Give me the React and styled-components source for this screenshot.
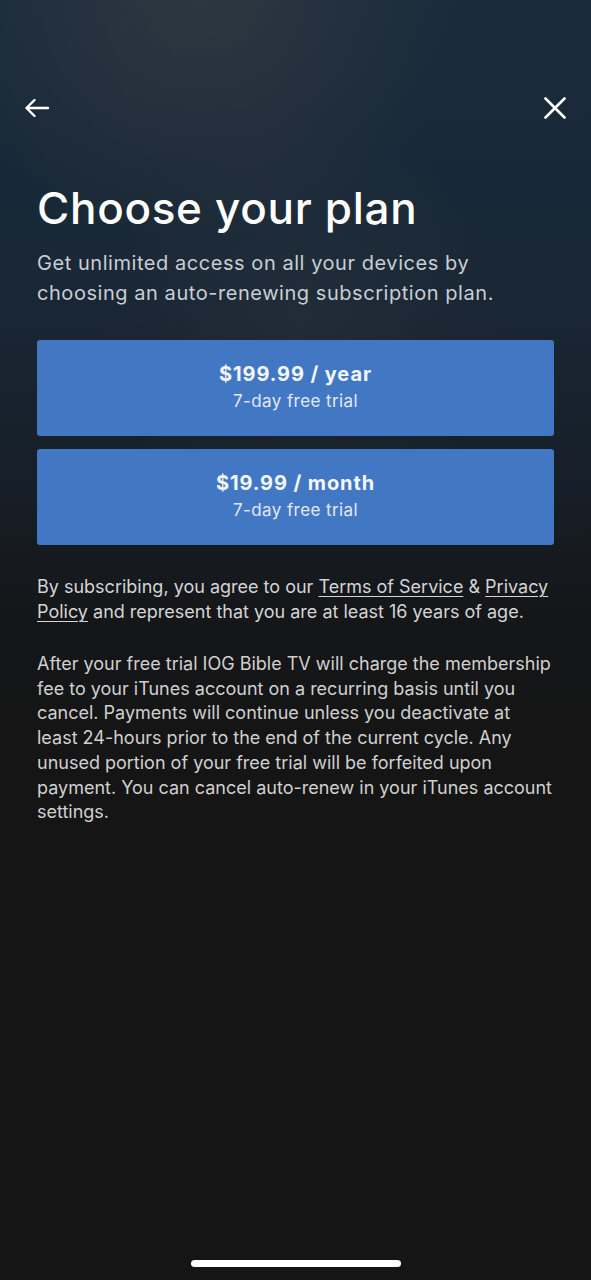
import React from "react";
import styled, { createGlobalStyle } from "styled-components";

const GlobalStyle = createGlobalStyle`
  html, body { margin: 0; padding: 0; background: #151515; }
  body { font-family: Inter, "Noto Sans", sans-serif; -webkit-font-smoothing: antialiased; }
`;

const plans = [
  { price: "$199.99 / year", trial: "7-day free trial" },
  { price: "$19.99 / month", trial: "7-day free trial" },
];

export default function App() {
  return (
    <>
      <GlobalStyle />
      <Page>
        <Header>
          <IconButton aria-label="Back">
            <svg width="26" height="26" viewBox="0 0 26 26" fill="none" stroke="#fff" strokeWidth="2.4" strokeLinecap="round" strokeLinejoin="round">
              <path d="M24 13H2.5M10.5 5L2.5 13l8 8" />
            </svg>
          </IconButton>
          <IconButton aria-label="Close">
            <svg width="22" height="22" viewBox="0 0 22 22" fill="none" stroke="#fff" strokeWidth="2.6" strokeLinecap="round">
              <path d="M1.5 1.5l19 19M20.5 1.5l-19 19" />
            </svg>
          </IconButton>
        </Header>

        <Content>
          <Title>Choose your plan</Title>
          <Subtitle>
            Get unlimited access on all your devices by choosing an auto-renewing subscription plan.
          </Subtitle>

          <Plans>
            {plans.map((p) => (
              <PlanButton key={p.price}>
                <Price>{p.price}</Price>
                <Trial>{p.trial}</Trial>
              </PlanButton>
            ))}
          </Plans>

          <Legal>
            By subscribing, you agree to our <LinkText>Terms of Service</LinkText> &amp;{" "}
            <LinkText>Privacy Policy</LinkText> and represent that you are at least 16 years of age.
          </Legal>
          <Fine>
            After your free trial IOG Bible TV will charge the membership fee to your iTunes account on a
            recurring basis until you cancel. Payments will continue unless you deactivate at least
            24-hours prior to the end of the current cycle. Any unused portion of your free trial will be
            forfeited upon payment. You can cancel auto-renew in your iTunes account settings.
          </Fine>
        </Content>

        <HomeBar />
      </Page>
    </>
  );
}

const Page = styled.div`
  position: relative;
  min-height: 1280px;
  box-sizing: border-box;
  display: flex;
  flex-direction: column;
  background:
    radial-gradient(ellipse 260px 240px at 200px 0px, rgba(70, 70, 70, 0.45), rgba(70, 70, 70, 0) 100%),
    radial-gradient(ellipse 200px 220px at 300px 330px, rgba(90, 90, 80, 0.12), rgba(90, 90, 80, 0) 100%),
    linear-gradient(180deg, #1a2b3c 0px, #192736 280px, #17202a 460px, #151618 620px, #151515 760px);
`;

const Header = styled.div`
  margin-top: 86px;
  height: 44px;
  padding: 0 25px 0 24px;
  display: flex;
  align-items: center;
  justify-content: space-between;
`;

const IconButton = styled.button`
  background: none;
  border: none;
  padding: 0;
  display: flex;
  cursor: pointer;
`;

const Content = styled.div`
  padding: 0 37px;
  display: flex;
  flex-direction: column;
`;

const Title = styled.h1`
  margin: 52px 0 0;
  font-size: 44px;
  line-height: 52px;
  font-weight: 500;
  color: #ffffff;
  letter-spacing: 0.7px;
`;

const Subtitle = styled.p`
  margin: 14px 0 0;
  font-size: 20px;
  line-height: 30px;
  color: #c9ced4;
  letter-spacing: 0.55px;
`;

const Plans = styled.div`
  margin-top: 32px;
  display: flex;
  flex-direction: column;
  gap: 13px;
`;

const PlanButton = styled.button`
  height: 96px;
  border: none;
  border-radius: 3px;
  background: #4277c4;
  display: flex;
  flex-direction: column;
  align-items: center;
  justify-content: center;
  gap: 4px;
  padding: 0 0 3px;
  font-family: inherit;
  cursor: pointer;
`;

const Price = styled.span`
  font-size: 20px;
  line-height: 24px;
  font-weight: 700;
  color: #f4f7fb;
  letter-spacing: 0.9px;
`;

const Trial = styled.span`
  font-size: 17px;
  line-height: 22px;
  color: #e2e9f4;
  letter-spacing: 0.4px;
`;

const Legal = styled.p`
  margin: 29px 0 0;
  font-size: 18px;
  line-height: 25px;
  color: #d3d4d6;
`;

const LinkText = styled.span`
  text-decoration: underline;
  text-underline-offset: 3px;
  text-decoration-thickness: 1px;
`;

const Fine = styled.p`
  margin: 28px 0 0;
  font-size: 18px;
  line-height: 24.7px;
  color: #d0d0d0;
`;

const HomeBar = styled.div`
  position: absolute;
  left: 191px;
  top: 1260px;
  width: 210px;
  height: 7px;
  border-radius: 4px;
  background: #ffffff;
`;
